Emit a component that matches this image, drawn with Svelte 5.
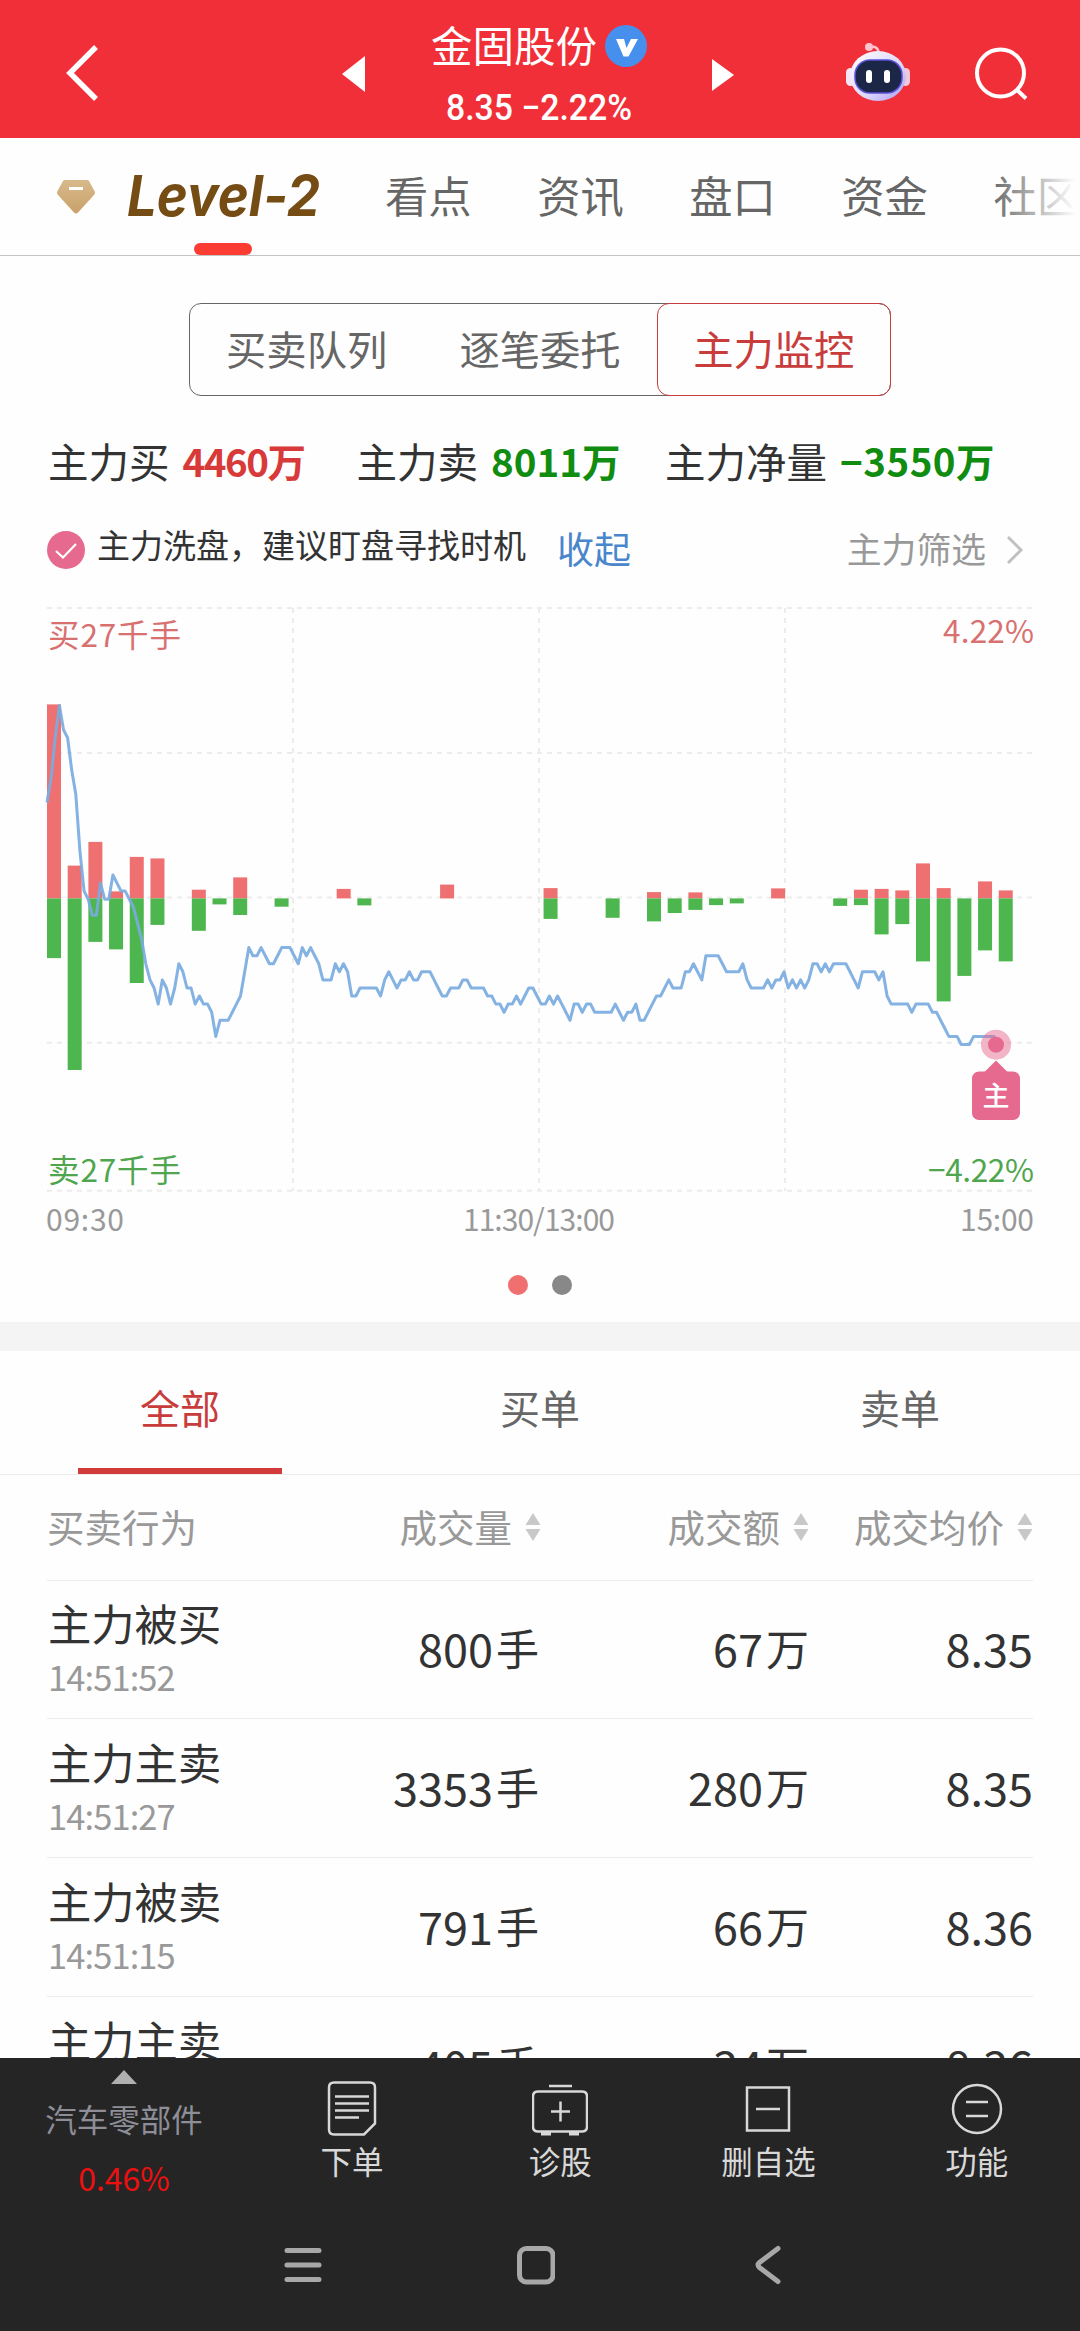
<script lang="ts">
  interface Trade {
    action: string;
    time: string;
    volume: string;
    amount: string;
    price: string;
  }

  const navTabs = ['看点', '资讯', '盘口', '资金', '社区'];
  const segments = ['买卖队列', '逐笔委托', '主力监控'];
  const orderTabs = ['全部', '买单', '卖单'];

  let segment = $state('主力监控');
  let orderTab = $state('全部');

  const trades: Trade[] = [
    { action: '主力被买', time: '14:51:52', volume: '800', amount: '67', price: '8.35' },
    { action: '主力主卖', time: '14:51:27', volume: '3353', amount: '280', price: '8.35' },
    { action: '主力被卖', time: '14:51:15', volume: '791', amount: '66', price: '8.36' },
    { action: '主力主卖', time: '', volume: '405', amount: '34', price: '8.36' },
  ];

  // [slot, buy height, sell height], one slot every five minutes
  const bars = [
    [0, 194, 59.7], [1, 32.8, 171.6], [2, 56.5, 43.5], [3, 7, 51], [4, 41.5, 84.6],
    [5, 40, 26.5], [7, 8.7, 32.4], [8, 0, 6], [9, 21, 16.6], [11, 0, 8.3],
    [14, 9.5, 0], [15, 0, 7], [19, 13.8, 0], [24, 10.3, 20.5], [27, 0, 19.4],
    [29, 6.3, 23], [30, 0, 14.6], [31, 6, 11.5], [32, 0, 6.7], [33, 0, 5],
    [35, 10, 0], [38, 0, 7.5], [39, 8.7, 6.7], [40, 9.5, 36], [41, 8, 25.7],
    [42, 35, 63], [43, 10.3, 103], [44, 0, 77.5], [45, 17, 52], [46, 8, 63],
  ];

  // price per minute, in ticks below the previous close
  const ticks = [
    -12, -15, -20, -24, -21, -20, -16, -13, -6, -1, 0, 2, 2, -2, 0, 0, -3, -2, -1, -1,
    0, 1, 3, 5, 8, 10, 11, 13, 10, 11, 13, 11, 8, 9, 11, 11, 13, 12, 13, 13,
    14, 17, 15, 15, 15, 14, 13, 12, 9, 6, 7, 7, 6, 7, 8, 8, 7, 6, 6, 6,
    7, 8, 6, 7, 6, 7, 8, 10, 10, 10, 8, 9, 8, 9, 12, 12, 11, 11, 11, 11,
    11, 12, 10, 9, 10, 11, 10, 10, 9, 10, 10, 9, 9, 9, 10, 11, 12, 12, 11, 11,
    11, 10, 10, 11, 11, 11, 11, 12, 12, 13, 13, 14, 13, 13, 12, 13, 12, 11, 11, 12,
    13, 13, 12, 13, 12, 13, 14, 15, 13, 13, 14, 13, 13, 14, 14, 14, 14, 14, 13, 14,
    15, 14, 14, 13, 15, 15, 14, 13, 12, 12, 11, 10, 11, 11, 11, 9, 9, 8, 9, 10,
    7, 7, 7, 7, 8, 9, 9, 9, 9, 8, 10, 11, 11, 11, 11, 10, 11, 10, 10, 9,
    11, 10, 11, 10, 11, 10, 8, 8, 9, 8, 9, 8, 8, 8, 8, 9, 10, 11, 9, 9,
    9, 9, 10, 9, 12, 13, 13, 13, 13, 13, 14, 13, 13, 13, 13, 14, 14, 15, 16, 17,
    17, 17, 18, 18, 18, 17, 17, 17, 17, 17, 17, 18,
  ];

  const zeroY = 298.4;
  const line = ticks
    .map((t, i) => `${(i * 4.118).toFixed(1)},${(299.2 + t * 8.07).toFixed(1)}`)
    .join(' ');
</script>

{#snippet sorter()}
  <svg class="sorter" width="16" height="28" viewBox="0 0 16 28">
    <path d="M8 0l7.5 12H.5zM8 28l7.5-12H.5z" fill="#c8c8c8" />
  </svg>
{/snippet}

<div class="page">
  <header>
    <button class="back" aria-label="返回">
      <svg width="36" height="60" viewBox="0 0 36 60">
        <path d="M32 4L6 30l26 26" fill="none" stroke="#fff" stroke-width="5.5" />
      </svg>
    </button>
    <svg class="prev" width="23" height="36" viewBox="0 0 23 36"><path d="M23 0v36L0 18z" fill="#fff" /></svg>
    <div class="quote">
      <div class="stock">
        <span>金固股份</span>
        <svg width="42" height="42" viewBox="0 0 42 42">
          <circle cx="21" cy="21" r="21" fill="#468fed" />
          <path d="M11 14h8l2.500 9 4.500-9h7l-9.500 17.500h-5z" fill="#fff" />
        </svg>
      </div>
      <svg class="change" width="190" height="34" viewBox="0 0 190 34">
        <text x="2" y="29" textLength="186" lengthAdjust="spacingAndGlyphs">8.35 −2.22%</text>
      </svg>
    </div>
    <svg class="next" width="22" height="32" viewBox="0 0 22 32"><path d="M0 0v32l22-16z" fill="#fff" /></svg>
    <svg class="robot" width="64" height="60" viewBox="0 0 64 60">
      <defs>
        <linearGradient id="shell" x1="0" y1="0" x2="1" y2="1">
          <stop offset="0" stop-color="#fff" />
          <stop offset=".6" stop-color="#dcd6fa" />
          <stop offset="1" stop-color="#a99af0" />
        </linearGradient>
      </defs>
      <path d="M24 5q8-2 9 7" fill="none" stroke="#ffc4d0" stroke-width="2.500" />
      <circle cx="23" cy="5" r="4" fill="#ffc4d0" />
      <rect x="0" y="26" width="9" height="18" rx="4.500" fill="#f6e4f4" />
      <rect x="55" y="26" width="9" height="18" rx="4.500" fill="#f0c8dc" />
      <ellipse cx="32" cy="34" rx="28" ry="25" fill="url(#shell)" />
      <rect x="9" y="18" width="47" height="33" rx="15" fill="#1c2748" stroke="#5a50d8" stroke-width="1.500" />
      <rect x="20" y="28" width="6" height="13" rx="3" fill="#fff" />
      <rect x="38" y="28" width="6" height="13" rx="3" fill="#fff" />
    </svg>
    <svg class="search" width="54" height="54" viewBox="0 0 54 54" fill="none" stroke="#fff" stroke-width="4">
      <circle cx="25.500" cy="26" r="23.500" />
      <path d="M42 43l9 8.500" />
    </svg>
  </header>

  <nav>
    <div class="level">
      <svg class="gem" width="40" height="36" viewBox="0 0 40 36">
        <defs>
          <linearGradient id="gem" x1="0" y1="0" x2="0" y2="1">
            <stop offset="0" stop-color="#d8b98c" />
            <stop offset="1" stop-color="#c9a168" />
          </linearGradient>
        </defs>
        <path d="M9 1h22q1.500 0 2.200 1.200l5.400 10q1 2-.4 3.600L22 33.500q-2 2-4 0L1.800 15.800q-1.400-1.600-.4-3.600l5.400-10Q7.500 1 9 1z" fill="url(#gem)" />
        <path d="M13 9.500h14" stroke="#fff" stroke-width="3" />
      </svg>
      <svg class="level-name" width="200" height="54" viewBox="0 0 200 54">
        <text x="0" y="49" textLength="193" lengthAdjust="spacingAndGlyphs">Level-2</text>
      </svg>
    </div>
    <div class="tabs">
      {#each navTabs as tab (tab)}
        <span>{tab}</span>
      {/each}
    </div>
    <i class="marker"></i>
  </nav>

  <main>
    <div class="segments" role="tablist">
      {#each segments as s (s)}
        <button role="tab" aria-selected={segment === s} class:active={segment === s} onclick={() => (segment = s)}>
          {s}
        </button>
      {/each}
    </div>

    <div class="stats">
      <p class="buy">主力买 <b class="up"><span>4460</span>万</b></p>
      <p>主力卖 <b class="down"><span>8011</span>万</b></p>
      <p class="net">主力净量 <b class="down"><span>−3550</span>万</b></p>
    </div>

    <div class="advice">
      <svg class="check" width="38" height="38" viewBox="0 0 38 38">
        <circle cx="19" cy="19" r="19" fill="#e6698f" />
        <path d="M9 20l7 6.500 13-13.500" fill="none" stroke="#fff" stroke-width="2.200" />
      </svg>
      <span class="tip">主力洗盘，建议盯盘寻找时机</span>
      <span class="fold">收起</span>
      <span class="filter">主力筛选</span>
      <svg class="more" width="18" height="30" viewBox="0 0 18 30">
        <path d="M2 2l13 13L2 28" fill="none" stroke="#c0c0c0" stroke-width="3" />
      </svg>
    </div>

    <svg class="chart" width="986" height="650" viewBox="0 0 986 650">
      <g stroke="#ececec" stroke-width="2" stroke-dasharray="5 5">
        {#each [8, 153, 297.5, 442.7, 590.7] as y}
          <line x1="0" x2="986" y1={y} y2={y} />
        {/each}
        {#each [246, 492, 738] as x}
          <line x1={x} x2={x} y1="8" y2="591" />
        {/each}
      </g>
      {#each bars as [slot, buy, sell] (slot)}
        <rect x={slot * 20.69} y={zeroY - buy} width="14" height={buy} fill="#ee7070" />
        <rect x={slot * 20.69} y={zeroY} width="14" height={sell} fill="#4eb64e" />
      {/each}
      <polyline points={line} fill="none" stroke="#7aabe0" stroke-opacity=".92" stroke-width="3" stroke-linejoin="round" />

      <circle cx="949" cy="444.700" r="15" fill="#e6698f" fill-opacity=".5" />
      <circle cx="949" cy="444.700" r="8" fill="#e6698f" />
      <path d="M949 460.500l12 12h-24z" fill="#e6698f" />
      <rect x="925" y="471.500" width="48" height="48.500" rx="7" fill="#e6698f" />
      <text class="tag" x="949" y="506" text-anchor="middle">主</text>

      <text class="up" x="1" y="46.500" textLength="133">买27千手</text>
      <text class="up" x="987" y="43" text-anchor="end" textLength="91">4.22%</text>
      <text class="down" x="1" y="582" textLength="133">卖27千手</text>
      <text class="down" x="987" y="582" text-anchor="end" textLength="106">−4.22%</text>
      <g class="axis">
        <text x="-1" y="631" textLength="78">09:30</text>
        <text x="492" y="631" text-anchor="middle" textLength="152">11:30/13:00</text>
        <text x="987" y="631" text-anchor="end" textLength="74">15:00</text>
      </g>
    </svg>

    <div class="dots"><i class="on"></i><i></i></div>

    <div class="order-tabs" role="tablist">
      {#each orderTabs as tab (tab)}
        <button role="tab" aria-selected={orderTab === tab} class:active={orderTab === tab} onclick={() => (orderTab = tab)}>
          {tab}
        </button>
      {/each}
    </div>

    <div class="table">
      <div class="row head">
        <span>买卖行为</span>
        <span class="num volume">成交量{@render sorter()}</span>
        <span class="num">成交额{@render sorter()}</span>
        <span class="num">成交均价{@render sorter()}</span>
      </div>
      {#each trades as t, i (i)}
        <div class="row">
          <div class="action">
            <strong>{t.action}</strong>
            <time>{t.time}</time>
          </div>
          <span class="num volume">{t.volume}<em>手</em></span>
          <span class="num">{t.amount}<em>万</em></span>
          <span class="num">{t.price}</span>
        </div>
      {/each}
    </div>
  </main>

  <footer>
    <div class="toolbar">
      <div class="sector">
        <svg width="26" height="14" viewBox="0 0 26 14"><path d="M13 0l13 14H0z" fill="#b0b0b0" /></svg>
        <span>汽车零部件</span>
        <b>0.46%</b>
      </div>
      <div class="tool">
        <svg width="56" height="56" viewBox="0 0 56 56">
          <path d="M10 2.500h36q5 0 5 5v36L40 54.500H10q-5 0-5-5v-42q0-5 5-5z" />
          <path d="M11 16.500h34M11 23.500h34M11 30.500h34M11 37.500h24" />
        </svg>
        <span>下单</span>
      </div>
      <div class="tool">
        <svg width="56" height="56" viewBox="0 0 56 56">
          <path d="M17 6h23M6 11.500h44q5 0 5 5v30q0 5-5 5H6q-5 0-5-5v-30q0-5 5-5zM28.500 21.500v20M19 31.500h19" />
          <path d="M9 53.500h10M37 53.500h10" stroke-width="4" />
        </svg>
        <span>诊股</span>
      </div>
      <div class="tool">
        <svg width="56" height="56" viewBox="0 0 56 56">
          <path d="M7 7.500h42v43H7zM16 29h24" />
        </svg>
        <span>删自选</span>
      </div>
      <div class="tool">
        <svg width="56" height="56" viewBox="0 0 56 56">
          <circle cx="28" cy="29" r="24" />
          <path d="M17 22h22M17 36h22" />
        </svg>
        <span>功能</span>
      </div>
    </div>
    <div class="system">
      <svg width="40" height="40" viewBox="0 0 40 40"><path d="M4 5.500h32M4 20h32M4 34.500h32" stroke-width="5" /></svg>
      <svg width="40" height="40" viewBox="0 0 40 40"><rect x="4.500" y="3.500" width="33.500" height="33.500" rx="7" stroke-width="5" /></svg>
      <svg width="40" height="40" viewBox="0 0 40 40"><path d="M31 3.500L12.500 17.500q-3 2.500 0 5L31 36.500" stroke-width="5" /></svg>
    </div>
  </footer>
</div>

<style>
  :global(body) {
    background: #fff;
  }

  .page {
    display: flex;
    flex-direction: column;
    width: 1080px;
    height: 2331px;
    overflow: hidden;
    background: #fefefe;
    color: #333;
    font-family: 'Noto Sans CJK SC', 'Noto Sans', sans-serif;
    line-height: 1;
  }

  svg {
    display: block;
    flex: none;
  }

  span,
  strong,
  time {
    white-space: nowrap;
  }

  button {
    padding: 0;
    border: 0;
    background: none;
    color: inherit;
    font: inherit;
  }

  header {
    display: flex;
    flex: none;
    align-items: center;
    box-sizing: border-box;
    height: 138px;
    padding: 8px 51px 0 64px;
    background: #f12f38;
    color: #fff;
  }

  .prev {
    margin: 2px 0 0 242px;
  }

  .quote {
    width: 218px;
    margin-left: 66px;
  }

  .stock {
    display: flex;
    align-items: center;
    justify-content: space-between;
    height: 54px;
    font-size: 41.5px;
  }

  .stock span {
    line-height: 42px;
    margin-top: -4px;
  }

  .change {
    margin: 18px 0 2px 13px;
    overflow: visible;
    fill: #fff;
    font-family: Roboto, sans-serif;
    font-size: 36px;
    font-weight: 500;
  }

  .next {
    margin: 3px 0 0 65px;
  }

  .robot {
    margin: -2px 0 0 112px;
  }

  .search {
    margin: 1px 0 0 65px;
  }

  nav {
    position: relative;
    display: flex;
    flex: none;
    align-items: center;
    box-sizing: border-box;
    height: 118px;
    padding-left: 56px;
    border-bottom: 1px solid #c4c4c4;
    overflow: hidden;
  }

  .level {
    display: flex;
    align-items: center;
    gap: 31px;
    width: 332px;
  }

  .level-name {
    overflow: visible;
    margin-top: -5px;
    fill: #744c14;
    font-family: Inter, sans-serif;
    font-size: 56px;
    font-style: italic;
    font-weight: 700;
  }

  .tabs {
    display: flex;
    gap: 65.500px;
    margin-top: -4px;
    color: #666;
    font-size: 43.300px;
  }

  nav::after {
    content: '';
    position: absolute;
    top: 0;
    right: 0;
    width: 90px;
    height: 100%;
    background: linear-gradient(to right, rgba(254, 254, 254, 0), #fefefe 95%);
  }

  .marker {
    position: absolute;
    bottom: 0;
    left: 194px;
    width: 58px;
    height: 12px;
    border-radius: 6px;
    background: #fa3c32;
  }

  main {
    flex: 1;
    min-height: 0;
    overflow: hidden;
  }

  .segments {
    display: grid;
    grid-template-columns: repeat(3, 1fr);
    box-sizing: border-box;
    width: 702px;
    height: 93px;
    margin: 47px auto 0;
    border: 1.500px solid #666;
    border-radius: 12px;
    color: #666;
    font-size: 40.300px;
  }

  .segments button {
    padding-bottom: 3px;
  }

  .segments .active {
    margin: -1px -1px -1px 0;
    border: 1.500px solid #c83c3c;
    border-radius: 12px;
    color: #c83c3c;
  }

  .stats {
    display: flex;
    height: 40px;
    margin: 45px 0 -1px 48px;
    font-size: 40.500px;
  }

  .stats p {
    display: flex;
    gap: 13px;
    width: 308.500px;
    margin: 0;
    white-space: nowrap;
  }

  .stats b {
    display: flex;
    font-size: 38.500px;
    font-weight: 700;
  }

  .stats .buy span {
    letter-spacing: -1.500px;
  }

  .stats .net span {
    letter-spacing: 0.500px;
  }

  .up {
    color: #d83a3a;
  }

  .down {
    color: #108c10;
  }

  .advice {
    display: flex;
    align-items: center;
    height: 40px;
    margin: 50px 56px 0 47px;
  }

  .tip {
    width: 460px;
    margin: -11px 0 0 12px;
    font-size: 33px;
  }

  .fold {
    flex: 1;
    color: #4a86cc;
    font-size: 37px;
    margin-top: -3px;
  }

  .filter {
    margin: -3px 20px 0 0;
    color: #999;
    font-size: 34.800px;
  }

  .chart {
    margin: 30px 0 0 47px;
    overflow: visible;
    font-size: 31.500px;
  }

  .chart .up {
    fill: #d87070;
  }

  .chart .down {
    fill: #4fa64f;
  }

  .chart .tag {
    fill: #fff;
    font-size: 27px;
    font-weight: 500;
  }

  .chart .axis {
    fill: #999;
    font-size: 30px;
  }

  .dots {
    display: flex;
    justify-content: center;
    gap: 24px;
    padding: 25px 0 27px;
  }

  .dots i {
    width: 20px;
    height: 20px;
    border-radius: 50%;
    background: #888;
  }

  .dots .on {
    background: #f07070;
  }

  .order-tabs {
    display: grid;
    grid-template-columns: repeat(3, 1fr);
    box-sizing: border-box;
    height: 153px;
    border-top: 29px solid #f4f4f4;
    border-bottom: 1px solid #ececec;
    color: #666;
    font-size: 40px;
  }

  .order-tabs button {
    justify-self: center;
    width: 204px;
    padding-bottom: 5px;
    border-bottom: 6px solid transparent;
  }

  .order-tabs .active {
    border-color: #d33a3a;
    color: #c83c3c;
  }

  .table {
    margin: 0 47px;
  }

  .row {
    display: grid;
    grid-template-columns: 230px 262px 270px 224px;
    align-items: center;
    box-sizing: border-box;
    height: 138.900px;
    padding-bottom: 4px;
    border-bottom: 1.500px solid #ececec;
    font-size: 45px;
  }

  .row.head {
    height: 105.500px;
    color: #999;
    font-size: 37.500px;
  }

  .num {
    display: flex;
    align-items: center;
    justify-content: flex-end;
  }

  .num em {
    margin-left: 3px;
    font-size: 43px;
    font-style: normal;
  }

  .head .volume {
    margin-right: -2px;
  }

  .sorter {
    margin: 4px 0 0 13px;
  }

  .action {
    display: grid;
    grid-template-rows: 44px 35px;
    gap: 14px;
    padding-left: 1px;
  }

  strong {
    font-size: 43.300px;
    font-weight: 400;
  }

  time {
    color: #999;
    font-size: 34.500px;
    letter-spacing: -0.9px;
  }

  footer {
    flex: none;
    height: 273px;
    background: #252525;
    color: #d8d8d8;
    font-size: 31.500px;
  }

  .toolbar {
    display: grid;
    grid-template-columns: 248px repeat(4, 208.200px);
    height: 154px;
  }

  .sector,
  .tool {
    display: flex;
    flex-direction: column;
    align-items: center;
  }

  .sector {
    padding-top: 12px;
    color: #8e8e98;
  }

  .sector span {
    margin-top: 19px;
  }

  .sector b {
    margin-top: 26px;
    color: #ec1010;
    font-size: 32px;
    font-weight: 400;
  }

  .tool {
    padding-top: 22px;
  }

  .tool svg {
    fill: none;
    stroke: #d8d8d8;
    stroke-width: 2.500;
  }

  .tool span {
    margin-top: 9px;
  }

  .system {
    display: flex;
    gap: 192px;
    margin: 33px 0 0 283px;
    fill: none;
    stroke: #a8a8a8;
    stroke-linecap: round;
  }
</style>
